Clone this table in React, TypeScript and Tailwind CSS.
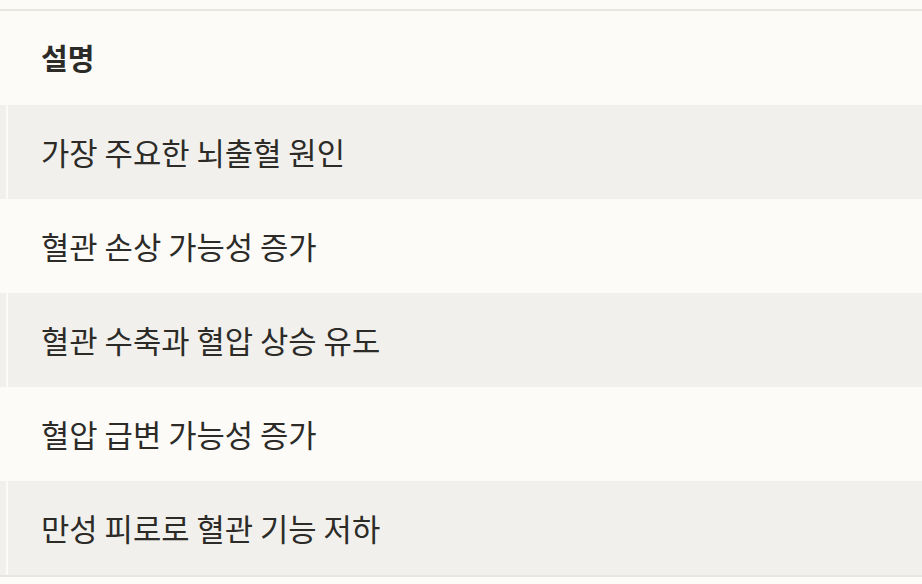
import React from 'react';

const rows = [
  '가장 주요한 뇌출혈 원인',
  '혈관 손상 가능성 증가',
  '혈관 수축과 혈압 상승 유도',
  '혈압 급변 가능성 증가',
  '만성 피로로 혈관 기능 저하',
];

interface RowProps {
  text: string;
  shaded: boolean;
  header?: boolean;
}

const Row: React.FC<RowProps> = ({ text, shaded, header }) => {
  const bg = shaded ? 'bg-[#f1f0ec]' : 'bg-[#fcfbf8]';
  return (
    <div className="flex h-[94px]">
      <div className={`w-[6px] shrink-0 ${bg}`} />
      <div className="w-[2px] shrink-0 bg-[#fcfbf8]" />
      <div
        className={`flex flex-1 items-center pl-[33px] text-[#2c2b28] ${bg} ${
          header ? 'text-[29px] font-bold' : 'text-[30.8px] font-normal'
        }`}
      >
        {text}
      </div>
    </div>
  );
};

export default function App() {
  return (
    <div
      className="w-[922px] h-[584px] bg-[#fcfbf8] pt-[9px] overflow-hidden"
      style={{ fontFamily: '"Noto Sans CJK KR", "Noto Sans", sans-serif' }}
    >
      <div className="border-y-2 border-[#e8e6e1]">
        <Row text="설명" shaded={false} header />
        {rows.map((r, i) => (
          <Row key={r} text={r} shaded={i % 2 === 0} />
        ))}
      </div>
    </div>
  );
}
